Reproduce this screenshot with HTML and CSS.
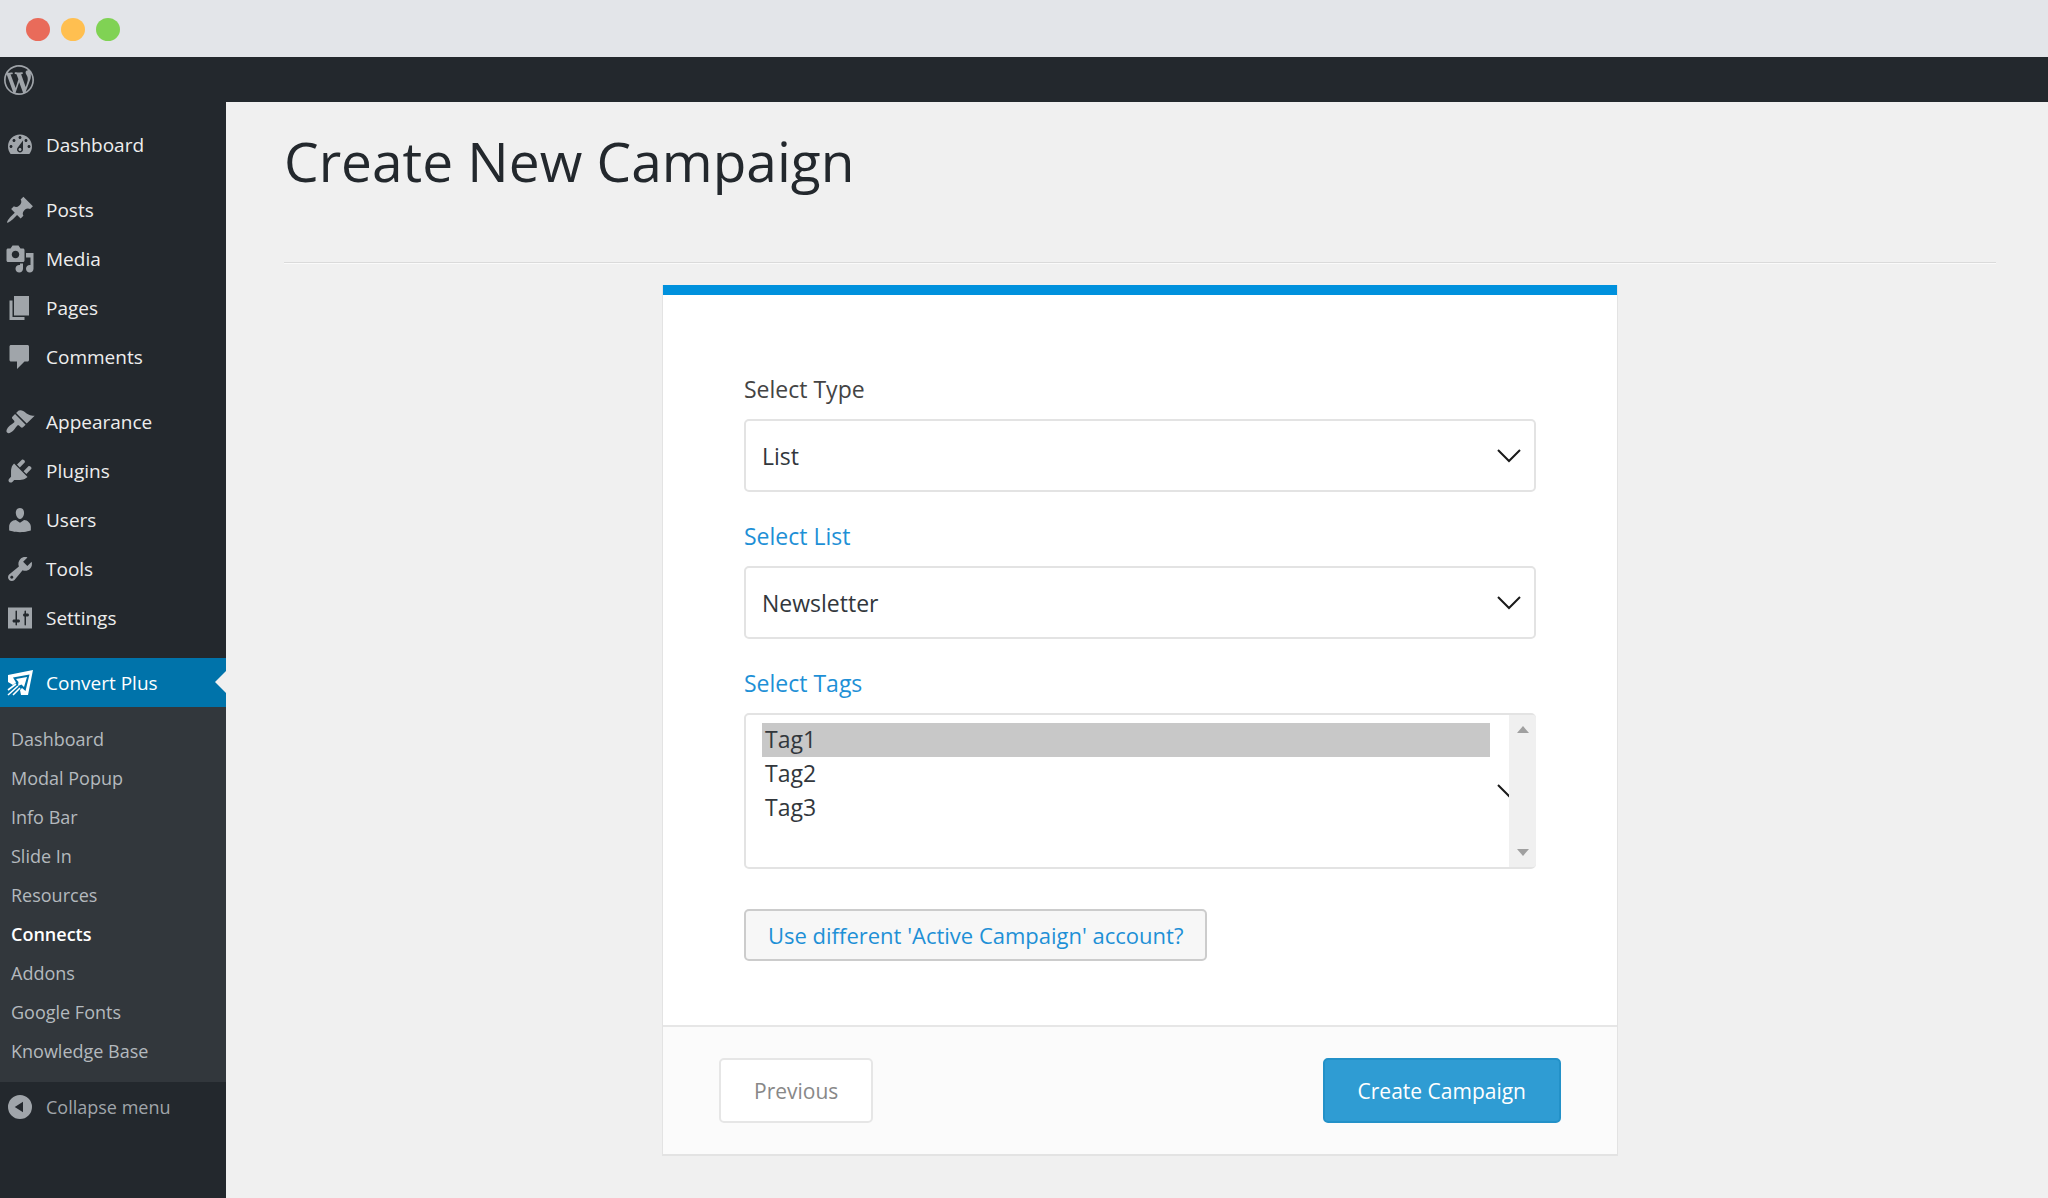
FILE: index.html
```html
<!DOCTYPE html>
<html lang="en">
<head>
  <meta charset="UTF-8" />
  <meta name="viewport" content="width=device-width, initial-scale=1.0" />
  <title>Create New Campaign</title>
  <link rel="stylesheet" href="styles.css">
</head>
<body>
  <div class="titlebar">
    <span class="dot red"></span>
    <span class="dot yellow"></span>
    <span class="dot green"></span>
  </div>

  <header class="adminbar">
    <a href="#" aria-label="About WordPress">
      <svg class="icon" viewBox="0 0 20 20"><path d="M20 10c0-5.51-4.49-10-10-10C4.48 0 0 4.49 0 10c0 5.52 4.48 10 10 10 5.51 0 10-4.48 10-10zM7.78 15.37L4.37 6.22c.55-.02 1.17-.08 1.17-.08.5-.06.44-1.13-.06-1.11 0 0-1.45.11-2.37.11-.18 0-.37 0-.58-.01C4.12 2.69 6.87 1.11 10 1.11c2.33 0 4.45.87 6.05 2.34-.68-.11-1.65.39-1.65 1.58 0 .74.45 1.36.9 2.1.35.61.55 1.36.55 2.46 0 1.49-1.4 5-1.4 5l-3.03-8.37c.54-.02.82-.17.82-.17.5-.05.44-1.25-.06-1.22 0 0-1.44.12-2.38.12-.87 0-2.33-.12-2.33-.12-.5-.03-.56 1.2-.06 1.22l.92.08 1.26 3.41zM17.41 10c.24-.64.74-1.87.43-4.25.7 1.29 1.05 2.71 1.05 4.25 0 3.29-1.73 6.24-4.4 7.78.97-2.59 1.94-5.2 2.92-7.78zM6.1 18.09C3.12 16.65 1.11 13.53 1.11 10c0-1.3.23-2.48.72-3.59C3.25 10.3 4.67 14.2 6.1 18.09zm4.03-6.63l2.58 6.98c-.86.29-1.76.45-2.71.45-.79 0-1.57-.11-2.29-.33.81-2.38 1.62-4.74 2.42-7.1z"/></svg>
    </a>
  </header>

  <div class="page">
    <nav class="sidebar">
      <ul class="menu">
        <li><a href="#"><svg class="icon" viewBox="0 0 20 20"><path d="M3.76 16h12.48c1.1-1.37 1.76-3.11 1.76-5 0-4.42-3.58-8-8-8s-8 3.58-8 8c0 1.89.66 3.63 1.76 5zM10 4c.55 0 1 .45 1 1s-.45 1-1 1-1-.45-1-1 .45-1 1-1zM6 6c.55 0 1 .45 1 1s-.45 1-1 1-1-.45-1-1 .45-1 1-1zm8 0c.55 0 1 .45 1 1s-.45 1-1 1-1-.45-1-1 .45-1 1-1zm-5.37 5.55L12 7v6c0 1.1-.9 2-2 2s-2-.9-2-2c0-.57.24-1.08.63-1.45zM4 10c.55 0 1 .45 1 1s-.45 1-1 1-1-.45-1-1 .45-1 1-1zm12 0c.55 0 1 .45 1 1s-.45 1-1 1-1-.45-1-1 .45-1 1-1zm-5 3c0-.55-.45-1-1-1s-1 .45-1 1 .45 1 1 1 1-.45 1-1z"/></svg>Dashboard</a></li>
      </ul>
      <ul class="menu">
        <li><a href="#"><svg class="icon" viewBox="0 0 20 20"><path d="M10.44 3.02l1.82-1.82 6.36 6.35-1.83 1.82c-1.05-.68-2.48-.57-3.41.36l-.75.75c-.92.93-1.04 2.35-.35 3.41l-1.83 1.82-2.41-2.41-2.8 2.79c-.42.42-3.38 2.71-3.8 2.29s1.86-3.39 2.28-3.81l2.79-2.79L4.1 9.36l1.83-1.82c1.05.69 2.48.57 3.4-.36l.75-.75c.93-.92 1.05-2.35.36-3.41z"/></svg>Posts</a></li>
        <li><a href="#"><svg class="icon" viewBox="0 0 20 20"><path d="M13 11V4c0-.55-.45-1-1-1h-1.67L9 1H5L3.67 3H2c-.55 0-1 .45-1 1v7c0 .55.45 1 1 1h10c.55 0 1-.45 1-1zM7 4.5c1.38 0 2.5 1.12 2.5 2.5S8.38 9.5 7 9.5 4.5 8.38 4.5 7 5.62 4.5 7 4.5zM14 6h5v10.5c0 1.38-1.12 2.5-2.5 2.5S14 17.88 14 16.5s1.12-2.5 2.5-2.5c.17 0 .34.02.5.05V9h-3V6zm-4 8.05V13h2v3.5c0 1.38-1.12 2.5-2.5 2.5S7 17.88 7 16.5 8.12 14 9.5 14c.17 0 .34.02.5.05z"/></svg>Media</a></li>
        <li><a href="#"><svg class="icon" viewBox="0 0 20 20"><path d="M6 15V2h10v13H6zm-1 1h8v2H3V5h2v11z"/></svg>Pages</a></li>
        <li><a href="#"><svg class="icon" viewBox="0 0 20 20"><path d="M4 2h11c.55 0 1 .45 1 1v9c0 .55-.45 1-1 1h-2l-5 5v-5H4c-.55 0-1-.45-1-1V3c0-.55.45-1 1-1z"/></svg>Comments</a></li>
      </ul>
      <ul class="menu">
        <li><a href="#"><svg class="icon" viewBox="0 0 20 20"><path d="M14.48 11.06L7.41 3.99l1.5-1.5c.5-.56 2.3-.47 3.51.32 1.21.8 1.43 1.28 2.91 2.1 1.18.64 2.45 1.26 4.45.85zm-.71.71L6.7 4.7 4.93 6.47c-.39.39-.39 1.02 0 1.41l1.06 1.06c.39.39.39 1.03 0 1.42-.6.6-1.43 1.11-2.21 1.69-.35.26-.7.53-1.01.84C1.43 14.23.4 16.08 1.4 17.07c.99 1 2.84-.03 4.18-1.36.31-.31.58-.66.85-1.02.57-.78 1.08-1.61 1.69-2.21.39-.39 1.02-.39 1.41 0l1.06 1.06c.39.39 1.02.39 1.41 0z"/></svg>Appearance</a></li>
        <li><a href="#"><svg class="icon" viewBox="0 0 20 20"><path d="M13.11 4.36L9.87 7.6 8 5.73l3.24-3.24c.35-.34 1.05-.2 1.56.32.52.51.66 1.21.31 1.55zm-8 1.77l.91-1.12 9.01 9.01-1.19.84c-.71.71-2.63 1.16-3.82 1.16H6.14L4.9 17.26c-.59.59-1.54.59-2.12 0-.59-.58-.59-1.53 0-2.12l1.24-1.24v-3.88c0-1.13.4-3.19 1.09-3.89zm7.26 3.97l3.24-3.24c.34-.35 1.04-.21 1.55.31.52.51.66 1.21.31 1.55l-3.24 3.25z"/></svg>Plugins</a></li>
        <li><a href="#"><svg class="icon" viewBox="0 0 20 20"><path d="M10 9.25c-2.27 0-2.73-3.44-2.73-3.44C7 4.02 7.82 2 9.97 2c2.16 0 2.98 2.02 2.71 3.81 0 0-.41 3.44-2.68 3.44zm0 2.57L12.72 10c2.39 0 4.52 2.33 4.52 4.53v2.49s-3.65 1.13-7.24 1.13c-3.65 0-7.24-1.13-7.24-1.13v-2.49c0-2.25 1.94-4.48 4.47-4.48z"/></svg>Users</a></li>
        <li><a href="#"><svg class="icon" viewBox="0 0 20 20"><path d="M16.68 9.77c-1.34 1.34-3.3 1.67-4.95.99l-5.41 6.52c-.99.99-2.59.99-3.58 0s-.99-2.59 0-3.57l6.52-5.42c-.68-1.65-.35-3.61.99-4.95 1.28-1.28 3.12-1.62 4.72-1.06l-2.89 2.89 2.82 2.82 2.86-2.87c.53 1.58.18 3.39-1.08 4.65zM3.81 16.21c.4.39 1.04.39 1.43 0 .4-.4.4-1.04 0-1.43-.39-.4-1.03-.4-1.43 0-.39.39-.39 1.03 0 1.43z"/></svg>Tools</a></li>
        <li><a href="#"><svg class="icon" viewBox="0 0 20 20"><path fill-rule="evenodd" d="M2 3h16v14H2zM8 11h1c.55 0 1 .45 1 1s-.45 1-1 1H8v1.5c0 .28-.22.5-.5.5s-.5-.22-.5-.5V13H6c-.55 0-1-.45-1-1s.45-1 1-1h1V5.5c0-.28.22-.5.5-.5s.5.22.5.5V11zm6-2h-1c-.55 0-1-.45-1-1s.45-1 1-1V5.500c0-.28.22-.5.5-.5s.5.22.5.5V7h1c.55 0 1 .45 1 1s-.45 1-1 1h-1v5.500c0 .28-.22.5-.5.5s-.5-.22-.5-.5V9z"/></svg>Settings</a></li>
      </ul>
      <ul class="menu">
        <li>
          <a href="#" class="current">
            <svg class="icon" viewBox="0 0 30 30"><path fill-rule="evenodd" d="M3 7 28 2 23 27H16L15 22 17 20 20.500 23 24.500 6.500 8 9.500 11 14.500 8 17 3 14z"/><path d="M11 11 22 9 19 19 16.500 16.500 13 18 13.500 14z"/><path fill="none" stroke="#fff" stroke-width="1.600" d="M11 16 3 22M13 18 3 27M15 20 8 27"/></svg>Convert Plus
          </a>
          <ul class="submenu">
            <li><a href="#">Dashboard</a></li>
            <li><a href="#">Modal Popup</a></li>
            <li><a href="#">Info Bar</a></li>
            <li><a href="#">Slide In</a></li>
            <li><a href="#">Resources</a></li>
            <li><a href="#" class="active">Connects</a></li>
            <li><a href="#">Addons</a></li>
            <li><a href="#">Google Fonts</a></li>
            <li><a href="#">Knowledge Base</a></li>
          </ul>
        </li>
      </ul>
      <button type="button" class="collapse">
        <svg class="icon" viewBox="0 0 20 20"><path fill-rule="evenodd" d="M10 2a8 8 0 1 1 0 16 8 8 0 0 1 0-16zM12 6.500 6.500 10 12 13.500z"/></svg>Collapse menu
      </button>
    </nav>

    <main class="content">
      <h1>Create New Campaign</h1>
      <hr>

      <form class="card">
        <div class="card-body">
          <div class="field">
            <label for="type">Select Type</label>
            <div class="select-wrap">
              <select id="type">
                <option>List</option>
              </select>
              <svg class="chevron" viewBox="0 0 24 14"><path d="M1 1 12 12 23 1"/></svg>
            </div>
          </div>

          <div class="field">
            <label for="list" class="blue">Select List</label>
            <div class="select-wrap">
              <select id="list">
                <option>Newsletter</option>
              </select>
              <svg class="chevron" viewBox="0 0 24 14"><path d="M1 1 12 12 23 1"/></svg>
            </div>
          </div>

          <div class="field">
            <label for="tags" class="blue">Select Tags</label>
            <div class="select-wrap">
              <select id="tags" multiple>
                <option selected>Tag1</option>
                <option>Tag2</option>
                <option>Tag3</option>
              </select>
              <svg class="chevron" viewBox="0 0 24 14"><path d="M1 1 12 12 23 1"/></svg>
              <div class="scrollbar">
                <svg viewBox="0 0 12 7"><path d="M0 7 6 0 12 7z"/></svg>
                <svg viewBox="0 0 12 7"><path d="M0 0 6 7 12 0z"/></svg>
              </div>
            </div>
          </div>

          <button type="button" class="btn btn-account">Use different 'Active Campaign' account?</button>
        </div>

        <div class="card-footer">
          <button type="button" class="btn btn-prev">Previous</button>
          <button type="submit" class="btn btn-create">Create Campaign</button>
        </div>
      </form>
    </main>
  </div>
</body>
</html>
```

FILE: styles.css
```css
* {
  box-sizing: border-box;
}
body {
  margin: 0;
  min-height: 100vh;
  display: flex;
  flex-direction: column;
  font-family: "Open Sans", "Noto Sans", sans-serif;
  background: #f0f0f0;
}
ul {
  list-style: none;
  margin: 0;
  padding: 0;
}
a {
  text-decoration: none;
}
button, select {
  font-family: inherit;
}

/* window bar */
.titlebar {
  display: flex;
  align-items: center;
  gap: 11px;
  height: 57px;
  padding: 2px 26px 0;
  background: #e3e5e9;
}
.dot {
  width: 24px;
  height: 23px;
  border-radius: 50%;
}
.red {
  background: #e96b5a;
}
.yellow {
  background: #ffbf50;
}
.green {
  background: #80d254;
}

.adminbar {
  display: flex;
  align-items: center;
  height: 45px;
  padding: 0 4px;
  background: #23282d;
}
.icon {
  display: block;
  width: 30px;
  height: 30px;
  fill: #a0a5aa;
}

.page {
  flex: 1;
  display: flex;
}

/* sidebar */
.sidebar {
  width: 226px;
  flex-shrink: 0;
  padding-top: 18px;
  background: #23282d;
}
.menu + .menu {
  margin-top: 16px;
}
.menu > li > a, .collapse {
  display: flex;
  align-items: center;
  gap: 11px;
  height: 49px;
  padding: 0 5px;
  color: #eee;
  font-size: 19px;
}
.menu > li > .current {
  position: relative;
  background: #0073aa;
  color: #fff;
}
.current .icon {
  fill: #fff;
}
.current::after {
  content: "";
  position: absolute;
  right: 0;
  top: 13px;
  border: 11px solid transparent;
  border-left: 0;
  border-right-color: #f0f0f0;
}
.submenu {
  padding: 13px 0 11px;
  background: #32373c;
}
.submenu a {
  display: block;
  padding: 0 11px;
  color: #b4b9be;
  font-size: 18px;
  line-height: 39px;
}
.submenu .active {
  color: #fff;
  font-weight: 600;
}
.menu + .collapse {
  width: 100%;
  border: 0;
  background: none;
  color: #a0a5aa;
  font-size: 18px;
}

/* content */
.content {
  flex: 1;
  padding: 19px 52px 42px 58px;
}
h1 {
  margin: 0 0 61px;
  color: #23282d;
  font-size: 55px;
  font-weight: 400;
  line-height: 80px;
}
hr {
  margin: 0 0 21px;
  border: 0;
  border-top: 1px solid #dadada;
  border-bottom: 1px solid #fafafa;
}
.card {
  max-width: 954px;
  margin: 0 auto;
  border-top: 10px solid #0091dd;
  background: #fff;
  box-shadow: 0 1px 0 1px #e3e3e3;
}
.card-body {
  padding: 77px 81px 64px;
}
.field {
  margin-bottom: 27px;
}
label {
  display: block;
  margin-bottom: 12px;
  color: #444;
  font-size: 23px;
  line-height: 35px;
}
.blue {
  color: #1e90d6;
}
.select-wrap {
  position: relative;
}
select {
  display: block;
  width: 100%;
  height: 73px;
  padding: 0 16px;
  border: 2px solid #e3e3e3;
  border-radius: 5px;
  appearance: none;
  background: #fff;
  color: #32373c;
  font-size: 23px;
}
select[multiple] {
  height: 156px;
  padding: 8px 44px 8px 16px;
  overflow: hidden;
}
select[multiple] option {
  height: 34px;
  padding: 0 3px;
  line-height: 34px;
}
select[multiple] option:checked {
  background: #c8c8c8 linear-gradient(#c8c8c8, #c8c8c8);
  color: #32373c;
}
.chevron {
  position: absolute;
  right: 15px;
  top: 50%;
  width: 24px;
  height: 14px;
  margin-top: -7px;
  fill: none;
  stroke: #1a1a1a;
  stroke-width: 2;
  pointer-events: none;
}
.scrollbar {
  position: absolute;
  top: 2px;
  right: 0;
  bottom: 2px;
  width: 27px;
  display: flex;
  flex-direction: column;
  align-items: center;
  justify-content: space-between;
  padding: 11px 0;
  border-radius: 0 3px 3px 0;
  background: #f0f0f0;
}
.scrollbar svg {
  width: 12px;
  height: 7px;
  fill: #a0a0a0;
}

.btn {
  height: 65px;
  padding: 0 33px;
  border: 2px solid #e6e6e6;
  border-radius: 5px;
  background: #fff;
  color: #888;
  font-size: 21px;
}
.btn-account {
  height: 52px;
  margin-top: 13px;
  padding: 0 22px;
  border-color: #ccc;
  background: #f7f7f7;
  color: #1e90d6;
  font-size: 22px;
}
.btn-create {
  border-color: #2391c8;
  background: #2f9cd3;
  color: #fff;
}
.card-footer {
  display: flex;
  justify-content: space-between;
  padding: 31px 56px;
  border-top: 2px solid #e6e6e6;
  background: #fbfbfb;
}
```
